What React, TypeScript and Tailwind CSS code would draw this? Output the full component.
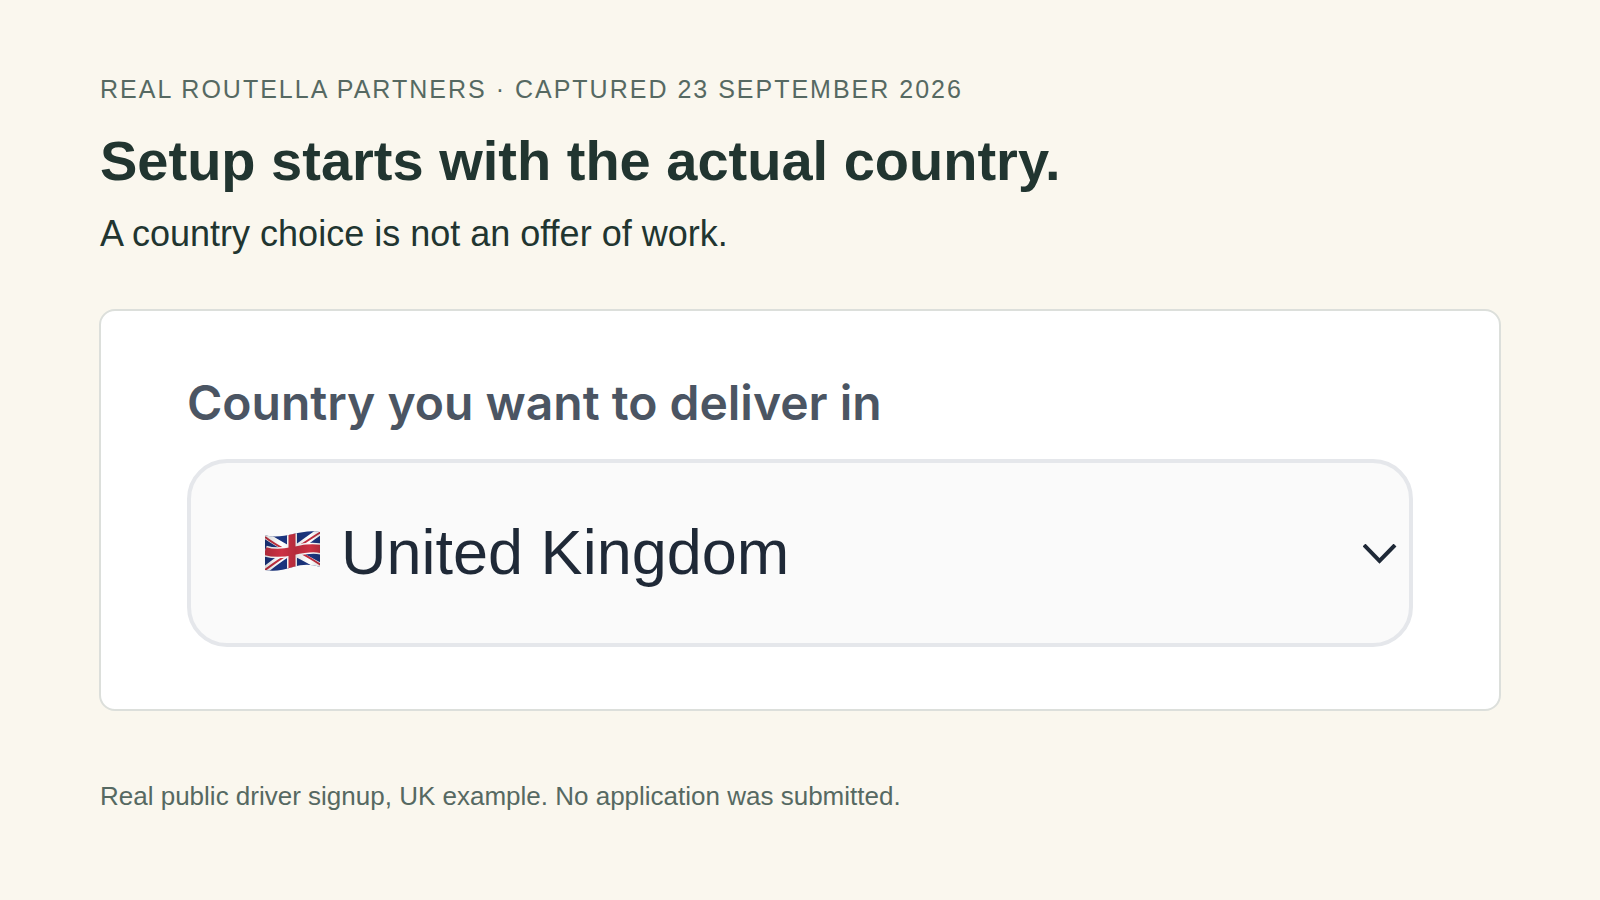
import { useState } from "react";

const UnitedKingdomFlag = () => (
    <svg viewBox="0 0 56 40" className="w-14 h-10" aria-hidden="true">
        <defs>
            <clipPath id="flag-shape">
                <path d="M0 4C9 7 19 5 28 3S46 -1 55 1V36C46 33 38 33 28 36S9 41 0 39Z" />
            </clipPath>
            <linearGradient id="flag-shade" x1="0" x2="1" y1="0" y2="0">
                <stop offset="0" stopColor="#000" stopOpacity="0.16" />
                <stop offset="0.3" stopColor="#000" stopOpacity="0" />
                <stop offset="0.55" stopColor="#000" stopOpacity="0.12" />
                <stop offset="0.8" stopColor="#000" stopOpacity="0" />
                <stop offset="1" stopColor="#000" stopOpacity="0.16" />
            </linearGradient>
        </defs>
        <g clipPath="url(#flag-shape)" fill="none">
            <rect width="56" height="40" fill="#1b3580" />
            <path d="M0 4C10 11 18 15 27 20S46 30 56 36M0 39C10 31 18 25 27 20S46 6 56 0" stroke="#fff" strokeWidth="7" />
            <path d="M0 6C9 13 17 17 26 22M28 18C38 22 46 28 56 34M0 39C9 32 17 27 26 21M28 19C38 13 46 7 56 1" stroke="#c43040" strokeWidth="2" />
            <path d="M0 20C9 23 19 22 28 20S46 16 56 18" stroke="#fff" strokeWidth="11" />
            <path d="M27 0V40" stroke="#fff" strokeWidth="10" />
            <path d="M0 20C9 23 19 22 28 20S46 16 56 18" stroke="#cc3143" strokeWidth="8" />
            <path d="M27 0V40" stroke="#cc3143" strokeWidth="7" />
            <rect width="56" height="40" fill="url(#flag-shade)" />
        </g>
    </svg>
);

const ChevronIcon = () => (
    <svg viewBox="0 0 34 20" className="w-[34px] h-5" fill="none" aria-hidden="true">
        <path d="M1 1L16.5 17L32 1" stroke="#1f2937" strokeWidth="4" />
    </svg>
);

export default function App() {
    const [country, setCountry] = useState("gb");

    return (
        <main className="min-h-screen bg-[#faf7ee] px-[99px] pt-[73px] pb-20 font-['Liberation_Sans',Arial,sans-serif] text-[#213530]">
            <header className="px-px">
                <p className="text-[25px] leading-8 tracking-[2px] text-[#566962] uppercase">
                    Real Routella Partners · Captured 23 September 2026
                </p>
                <h1 className="mt-6 text-[56px] leading-16 font-bold">
                    Setup starts with the actual country.
                </h1>
                <p className="mt-[21px] text-[36px] leading-10">
                    A country choice is not an offer of work.
                </p>
            </header>

            <section className="mt-[55px] rounded-2xl border-2 border-[#dcdfdb] bg-white px-[86px] pt-[60px] pb-[62px]">
                <label
                    htmlFor="country"
                    className="block text-[48px] leading-16 font-semibold text-[#4b5563] font-['Inter','Liberation_Sans',sans-serif]"
                >
                    Country you want to deliver in
                </label>
                <div className="relative mt-6">
                    <select
                        id="country"
                        value={country}
                        onChange={(e) => setCountry(e.target.value)}
                        className="block w-full h-[188px] appearance-none rounded-[40px] border-4 border-[#e5e7eb] bg-[#fafafa] pl-[150px] pr-20 pb-0.5 text-[63px] text-[#1f2937]"
                    >
                        <option value="gb">United Kingdom</option>
                    </select>
                    {/* Flag and arrow lie over the select */}
                    <span className="pointer-events-none absolute inset-y-0 left-[78px] flex items-center pb-1">
                        <UnitedKingdomFlag />
                    </span>
                    <span className="pointer-events-none absolute inset-y-0 right-4 flex items-center pt-0.5">
                        <ChevronIcon />
                    </span>
                </div>
            </section>

            <p className="mt-[69px] px-px text-[26px] leading-8 text-[#566962]">
                Real public driver signup, UK example. No application was submitted.
            </p>
        </main>
    );
}
